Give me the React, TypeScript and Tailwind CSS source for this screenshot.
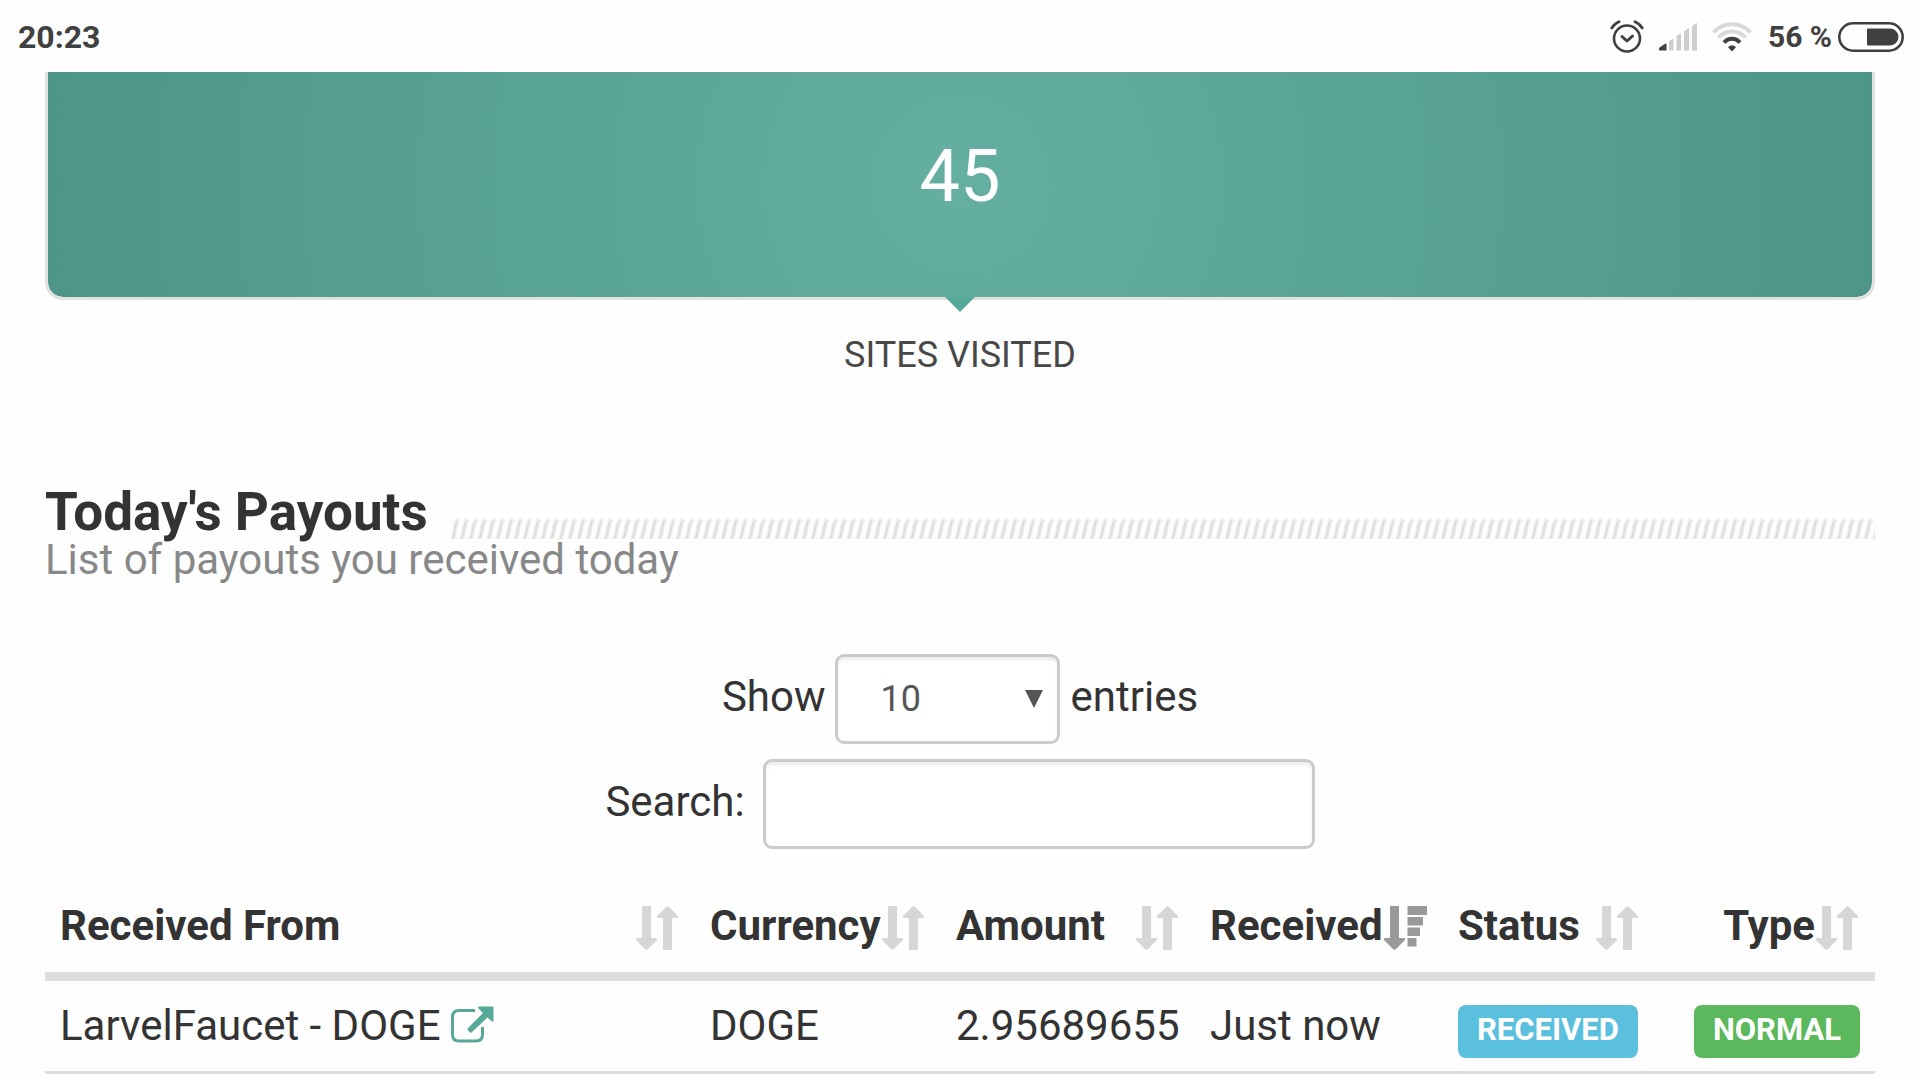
import { useState } from "react";

type Payout = {
  id: number;
  source: string;
  currency: string;
  amount: string;
  received: string;
  status: string;
  type: string;
};

const payouts: Payout[] = [
  {
    id: 1,
    source: "LarvelFaucet - DOGE",
    currency: "DOGE",
    amount: "2.95689655",
    received: "Just now",
    status: "RECEIVED",
    type: "NORMAL",
  },
];

const columns = [
  { label: "Received From", width: "" },
  { label: "Currency", width: "w-[246px]" },
  { label: "Amount", width: "w-[254px]" },
  { label: "Received", width: "w-[248px]", sorted: true },
  { label: "Status", width: "w-[212px]" },
  { label: "Type", width: "w-[220px]", right: true },
];

function AlarmIcon() {
  return (
    <svg width="34" height="34" viewBox="0 0 34 34" fill="none" stroke="#404040" aria-hidden="true">
      <circle cx="17" cy="18.5" r="13" strokeWidth="2.6" />
      <path d="M12 16.5l5 4.5 5.5-5" strokeWidth="3" strokeLinecap="round" strokeLinejoin="round" />
      <path d="M1.8 8C3.5 5.2 6 3 9 1.8M32.2 8C30.5 5.2 28 3 25 1.8" strokeWidth="2.8" strokeLinecap="round" />
    </svg>
  );
}

function SignalIcon() {
  return (
    <svg width="40" height="28" viewBox="0 0 40 28" aria-hidden="true">
      <path d="M1.5 24.5L7.5 20.5Q8.5 20 8.5 21.5V27.5H2Q0 27.5 1.5 24.5Z" fill="#404040" />
      <g fill="#cdcdcd">
        <path d="M11 18.5Q11 17.5 15.5 15.5V27.5H11Z" />
        <path d="M18.5 13.5Q18.5 12.5 23 10.5V27.5H18.5Z" />
        <path d="M26 8.5Q26 7.5 31 5V27.5H26Z" />
        <path d="M34 3.5Q34 2.5 39 0V27.5H34Z" />
      </g>
    </svg>
  );
}

function WifiIcon() {
  return (
    <svg width="40" height="30" viewBox="0 0 40 30" fill="none" aria-hidden="true">
      <path d="M1.5 10.500C11.500-.5 28.500-.5 38.500 10.500" stroke="#d9d9d9" strokeWidth="4" />
      <path d="M6.500 15.500C14 7.500 26 7.500 33.500 15.500" stroke="#d9d9d9" strokeWidth="4" />
      <path d="M12 20.500C16.500 15.500 23.500 15.500 28 20.500" stroke="#404040" strokeWidth="4" />
      <path d="M16 25.200Q20 21.500 24 25.200L20 29.500Z" fill="#404040" />
    </svg>
  );
}

function BatteryIcon() {
  return (
    <svg width="66" height="30" viewBox="0 0 66 30" aria-hidden="true">
      <rect x="1.3" y="1.3" width="63.4" height="27.4" rx="13.7" fill="none" stroke="#404040" strokeWidth="2.6" />
      <path d="M30 6.5H52A8.500 8.500 0 0 1 52 23.500H30Q29 23.500 29 22.500V7.500Q29 6.500 30 6.500Z" fill="#404040" />
    </svg>
  );
}

function SortIcon({ sorted }: { sorted?: boolean }) {
  return (
    <svg
      className={sorted ? "mt-1 shrink-0 text-[#999]" : "mt-1 shrink-0 text-[#d6d6d6]"}
      width="43"
      height="44"
      viewBox="0 0 43 44"
      fill="currentColor"
      aria-hidden="true"
    >
      <path d="M6 0H15V32H20Q22 32.500 20.500 34.500L12 43Q10.500 44.500 9 43L.5 34.500Q-1 32.500 1 32H6Z" />
      {sorted ? (
        <path d="M23.500 0H43V9H23.500ZM23.500 11H39V19.500H23.500ZM23.500 21.500H36V30H23.500ZM23.500 32H32.500V40.500H23.500Z" />
      ) : (
        <path d="M27 44H36V12H41Q43 11.500 41.500 9.500L33 1Q31.500-.5 30 1L21.500 9.500Q20 11.500 22 12H27Z" />
      )}
    </svg>
  );
}

function ExternalIcon() {
  return (
    <svg className="inline-block align-[-3px]" width="43" height="37" viewBox="0 0 43 37" aria-hidden="true">
      <path
        d="M24 4.500H8Q1.500 4.500 1.500 11V28.500Q1.500 35 8 35H25Q31.500 35 31.500 28.500V21"
        fill="none"
        stroke="#56a899"
        strokeWidth="3"
      />
      <path
        d="M28 .5H41.500Q42.500 .5 42.500 1.500V15Q42 16 41 15.500L36.500 11.500L20.500 26.500Q19.500 27 18.500 26L17 24Q16 23 17 22L32 7L27.500 2.500Q26.500 1 28 .5Z"
        fill="#56a899"
      />
    </svg>
  );
}

function Stripes() {
  return (
    <svg className="ml-[23px] h-[21px] flex-1" aria-hidden="true">
      <defs>
        <pattern id="stripes" width="9" height="21" patternUnits="userSpaceOnUse">
          <g fill="none" stroke="#f0f0f0" strokeWidth="5">
            <path d="M1 22Q3 18 4 11T8 1" />
            <path d="M-8 22Q-6 18 -5 11T-1 1" />
            <path d="M10 22Q12 18 13 11T17 1" />
          </g>
          <g fill="none" stroke="#dedede" strokeWidth="2">
            <path d="M1 22Q3 18 4 11T7 3" />
            <path d="M10 22Q12 18 13 11T16 3" />
          </g>
        </pattern>
      </defs>
      <rect width="100%" height="21" fill="url(#stripes)" />
    </svg>
  );
}

function StatusBar() {
  return (
    <header className="flex h-[72px] items-center justify-between pt-0.5 pl-[18px] pr-4 font-bold text-[#404040]">
      <time className="text-[32px] leading-9">20:23</time>
      <div className="flex items-center">
        <AlarmIcon />
        <div className="ml-[14px]">
          <SignalIcon />
        </div>
        <div className="ml-[14px]">
          <WifiIcon />
        </div>
        <span className="ml-4 mr-1.5 text-[30px] leading-9">56 %</span>
        <BatteryIcon />
      </div>
    </header>
  );
}

export default function App() {
  const [entries, setEntries] = useState("10");
  const [search, setSearch] = useState("");

  const rows = payouts.filter((payout) => payout.source.toLowerCase().includes(search.toLowerCase()));

  return (
    <div className="min-h-screen bg-[#fefefe] font-['Roboto',sans-serif] text-[42px] leading-[60px] text-[#333]">
      <StatusBar />

      <main className="px-[45px]">
        {/* Visited sites counter */}
        <section className="text-center">
          <div className="relative h-[228px] rounded-b-[18px] border-x-[3px] border-b-[3px] border-[#e1e1e1] bg-[radial-gradient(circle_at_center,#64afa2,#4d9588)] bg-clip-padding pt-[69px]">
            <p className="text-[72px] leading-[72px] text-white">45</p>
            <svg className="absolute top-full left-1/2 -translate-x-1/2" width="30" height="15" viewBox="0 0 30 15" aria-hidden="true">
              <path d="M0 0H30L15 15Z" fill="#56a899" />
            </svg>
          </div>
          <h3 className="mt-[37px] text-[36px] leading-9 text-[#484848]">SITES VISITED</h3>
        </section>

        {/* Section title with striped filler */}
        <div className="mt-28">
          <div className="flex items-end">
            <h2 className="text-[53px] font-bold leading-[54px]">Today's Payouts</h2>
            <Stripes />
          </div>
          <p className="leading-[42px] text-[#888]">List of payouts you received today</p>
        </div>

        {/* Table filters */}
        <div className="mt-[73px] flex flex-col items-center gap-[15px]">
          <label className="flex items-baseline gap-[10px]">
            Show
            <span className="relative">
              <select
                className="block h-[90px] w-[225px] appearance-none rounded-[9px] border-[3px] border-[#ccc] bg-white pl-[42px] text-[36px] leading-[48px] text-[#555] shadow-[inset_0_3px_3px_rgba(0,0,0,0.075)]"
                value={entries}
                onChange={(e) => setEntries(e.target.value)}
              >
                <option>10</option>
                <option>25</option>
                <option>50</option>
                <option>100</option>
              </select>
              <svg
                className="pointer-events-none absolute top-9 right-[17px]"
                width="18"
                height="18"
                viewBox="0 0 18 18"
                aria-hidden="true"
              >
                <path d="M0 0H18L9 18Z" fill="#555" />
              </svg>
            </span>
            entries
          </label>
          <label className="flex items-baseline gap-[18px]">
            Search:
            <input
              type="search"
              className="h-[90px] w-[552px] appearance-none rounded-[9px] border-[3px] border-[#ccc] bg-white px-9 text-[36px] text-[#555] shadow-[inset_0_3px_3px_rgba(0,0,0,0.075)]"
              value={search}
              onChange={(e) => setSearch(e.target.value)}
            />
          </label>
        </div>

        {/* Payouts */}
        <table className="mt-8 w-full table-fixed border-separate border-spacing-0 text-left">
          <thead>
            <tr>
              {columns.map((column) => (
                <th key={column.label} className={`${column.width} border-b-[9px] border-[#ddd] p-0 font-bold`}>
                  <button
                    className={`flex w-full items-center gap-px pt-[15px] pb-4 pl-[15px] pr-4 whitespace-nowrap ${
                      column.right ? "justify-end" : "justify-between"
                    }`}
                  >
                    {column.label}
                    <SortIcon sorted={column.sorted} />
                  </button>
                </th>
              ))}
            </tr>
          </thead>
          <tbody>
            {rows.map((payout) => (
              <tr key={payout.id} className="whitespace-nowrap *:border-b-[3px] *:border-[#ddd] *:p-[15px]">
                <td>
                  {payout.source}{" "}
                  <a href="#" aria-label={`Open ${payout.source}`}>
                    <ExternalIcon />
                  </a>
                </td>
                <td>{payout.currency}</td>
                <td>{payout.amount}</td>
                <td>{payout.received}</td>
                <td>
                  <span className="rounded-[8px] bg-[#5bc0de] px-[19px] pt-[6px] pb-[10px] text-[31px] leading-none font-bold text-white">
                    {payout.status}
                  </span>
                </td>
                <td className="text-right">
                  <span className="rounded-[8px] bg-[#5cb85c] px-[19px] pt-[6px] pb-[10px] text-[31px] leading-none font-bold text-white">
                    {payout.type}
                  </span>
                </td>
              </tr>
            ))}
          </tbody>
        </table>
      </main>
    </div>
  );
}
